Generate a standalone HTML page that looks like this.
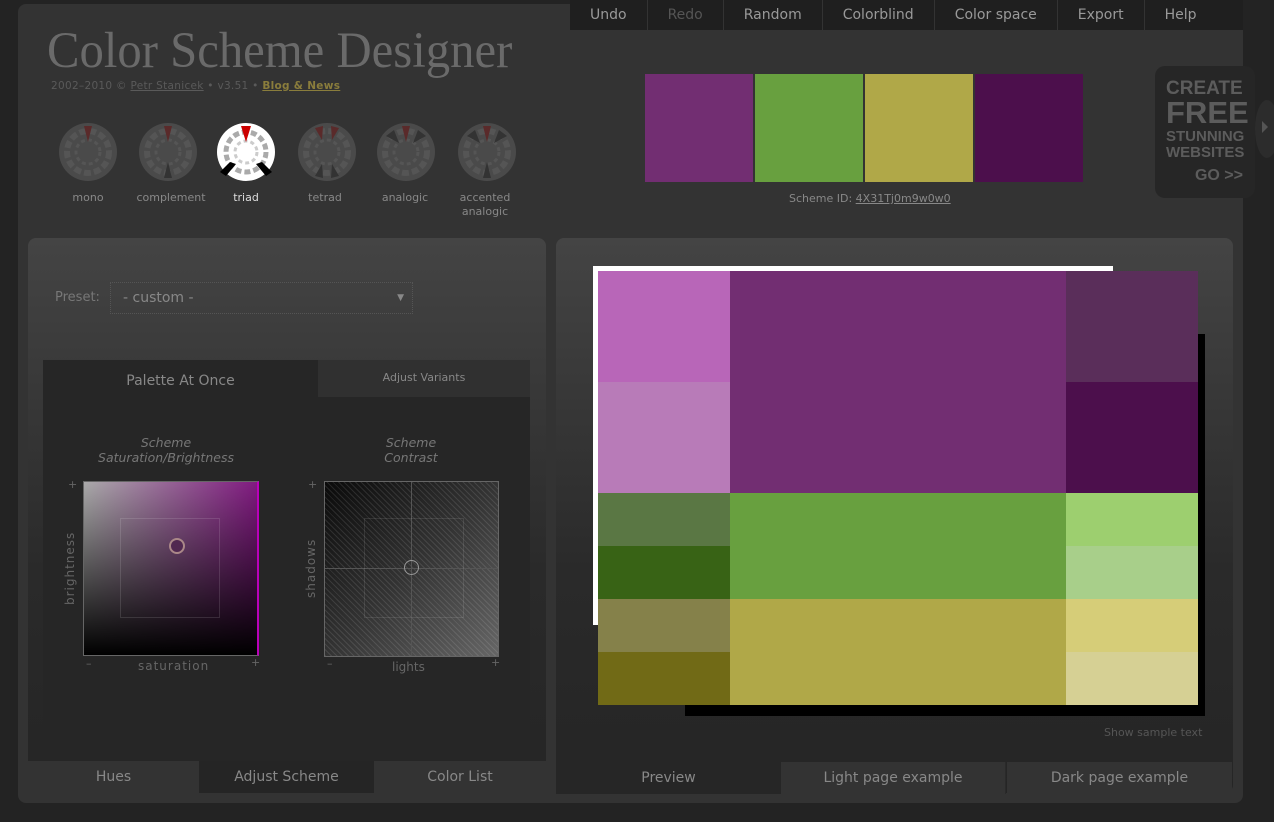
<!DOCTYPE html>
<html><head><meta charset="utf-8"><style>
*{margin:0;padding:0;box-sizing:border-box}
body{width:1274px;height:822px;background:#232323;font-family:"DejaVu Sans","Liberation Sans",sans-serif;position:relative;overflow:hidden;color:#888}
.a{position:absolute}
#main{left:18px;top:4px;width:1225px;height:799px;background:#333;border-radius:8px}
#nav{left:570px;top:0;width:673px;height:30px;background:#1f1f1f;display:flex;font-size:14px}
#nav div{height:30px;line-height:30px;padding:0 20px;border-right:1px solid #333;color:#999}
.sw{top:74px;width:108px;height:108px}
.w{width:60px;height:60px;border-radius:50%}
.lbl{font-size:11px;color:#888;text-align:center;width:100px}
.panel{border-radius:8px;background:linear-gradient(#444,#2a2a2a 60%,#252525)}
.c{position:absolute}
.tab{position:absolute;height:32px;line-height:32px;text-align:center;font-size:14px;color:#888}
</style></head><body>
<div class="a" id="main"></div>
<div class="a" id="nav"><div>Undo</div><div style="color:#555">Redo</div><div>Random</div><div>Colorblind</div><div>Color space</div><div>Export</div><div style="border:none">Help</div></div>
<div class="a" style="left:47px;top:22px;font-family:'Liberation Serif',serif;font-size:51px;color:#6a6a6a;transform:scaleX(0.955);transform-origin:left;white-space:nowrap">Color Scheme Designer</div>
<div class="a" style="left:51px;top:80px;font-size:10.5px;color:#5a5a5a;letter-spacing:.3px">2002–2010 © <u>Petr Stanicek</u> • v3.51 • <b style="color:#8a7d3c;text-decoration:underline">Blog &amp; News</b></div>

<svg class="a" style="left:0;top:0" width="560" height="200">
<defs><g id="wh"><circle r="29" fill="#4a4a4a"/><circle r="21" fill="none" stroke="#555" stroke-width="6" stroke-dasharray="7 3"/><circle r="12" fill="none" stroke="#555" stroke-width="3" stroke-dasharray="4 3"/></g></defs>
<g transform="translate(88,152)"><use href="#wh"/><polygon points="-4,-26 4,-26 0,-10" fill="#5a2a2a"/></g>
<g transform="translate(168,152)"><use href="#wh"/><polygon points="-4,-26 4,-26 0,-10" fill="#5a2a2a"/><polygon points="-4,26 4,26 0,10" fill="#333"/></g>
<g transform="translate(246,152)"><circle r="29" fill="#fff"/><circle r="20" fill="none" stroke="#aaa" stroke-width="5" stroke-dasharray="6 3"/><circle r="11" fill="none" stroke="#ccc" stroke-width="3" stroke-dasharray="4 3"/><polygon points="-5,-26 5,-26 0,-10" fill="#c00"/><polygon points="-16,10 -26,20 -20,24 -10,12" fill="#000"/><polygon points="16,10 26,20 20,24 10,12" fill="#000"/></g>
<g transform="translate(327,152)"><use href="#wh"/><polygon points="-12,-24 -4,-26 -5,-12" fill="#5a2a2a"/><polygon points="12,-24 4,-26 5,-12" fill="#5a2a2a"/><polygon points="-12,24 -4,26 -5,12" fill="#333"/><polygon points="12,24 4,26 5,12" fill="#333"/></g>
<g transform="translate(406,152)"><use href="#wh"/><polygon points="-4,-26 4,-26 0,-10" fill="#5a2a2a"/><polygon points="-20,-16 -12,-22 -7,-9" fill="#333"/><polygon points="20,-16 12,-22 7,-9" fill="#333"/></g>
<g transform="translate(487,152)"><use href="#wh"/><polygon points="-4,-26 4,-26 0,-10" fill="#5a2a2a"/><polygon points="-20,-16 -12,-22 -7,-9" fill="#333"/><polygon points="20,-16 12,-22 7,-9" fill="#333"/><polygon points="-4,26 4,26 0,10" fill="#333"/></g>
</svg>
<div class="a lbl" style="left:38px;top:191px">mono</div>
<div class="a lbl" style="left:121px;top:191px">complement</div>
<div class="a lbl" style="left:196px;top:191px;color:#ddd">triad</div>
<div class="a lbl" style="left:275px;top:191px">tetrad</div>
<div class="a lbl" style="left:355px;top:191px">analogic</div>
<div class="a lbl" style="left:435px;top:191px;line-height:14px">accented<br>analogic</div>

<div class="a sw" style="left:645px;background:#722e72"></div>
<div class="a sw" style="left:755px;background:#68a03f"></div>
<div class="a sw" style="left:865px;background:#b0a848"></div>
<div class="a sw" style="left:975px;background:#4c0f4c"></div>
<div class="a" style="left:789px;top:192px;font-size:11px;color:#888">Scheme ID: <u>4X31Tj0m9w0w0</u></div>

<div class="a" style="left:1255px;top:100px;width:24px;height:58px;background:#2c2c2c;border-radius:50%"></div>
<div class="a" style="left:1262px;top:121px;width:0;height:0;border-left:6px solid #555;border-top:6px solid transparent;border-bottom:6px solid transparent"></div>
<div class="a" style="left:1155px;top:66px;width:100px;height:132px;background:#262626;border-radius:10px;font-family:'Liberation Sans',sans-serif;font-weight:bold;color:#5c5c5c;text-align:left;padding:13px 0 0 11px;line-height:1">
<div style="font-size:19px">CREATE</div><div style="font-size:31px;margin-top:-1px">FREE</div><div style="font-size:15px;margin-top:1px">STUNNING</div><div style="font-size:15px;margin-top:1px">WEBSITES</div><div style="font-size:16px;text-align:right;padding-right:12px;margin-top:8px">GO &gt;&gt;</div></div>

<div class="a panel" style="left:28px;top:238px;width:518px;height:555px"></div>
<div class="a" style="left:55px;top:290px;font-size:13px;color:#777">Preset:</div>
<div class="a" style="left:110px;top:282px;width:303px;height:32px;border:1px dotted #555;font-size:14px;color:#888;padding:7px 12px">- custom -<span style="position:absolute;right:8px;top:10px;font-size:9px">▼</span></div>
<div class="a" style="left:43px;top:360px;width:487px;height:400px;background:#262626"></div>
<div class="a" style="left:318px;top:360px;width:212px;height:37px;background:#303030;text-align:center;line-height:36px;font-size:11px;color:#888">Adjust Variants</div>
<div class="a" style="left:43px;top:360px;width:275px;height:40px;text-align:center;line-height:42px;font-size:14px;color:#888">Palette At Once</div>
<div class="a" style="left:86px;top:435px;width:160px;text-align:center;font-style:italic;font-size:12.5px;line-height:15px;color:#777">Scheme<br>Saturation/Brightness</div>
<div class="a" style="left:331px;top:435px;width:160px;text-align:center;font-style:italic;font-size:12.5px;line-height:15px;color:#777">Scheme<br>Contrast</div>
<div class="a" style="left:83px;top:481px;width:176px;height:175px;border:1px solid #666;border-right:2px solid #b0b;background:linear-gradient(to bottom,transparent,#000),linear-gradient(to right,#aaa,#801a80)"></div>
<div class="a" style="left:120px;top:518px;width:100px;height:100px;border:1px solid rgba(255,255,255,.12)"></div>
<div class="a" style="left:169px;top:538px;width:16px;height:16px;border-radius:50%;border:2px solid #a88;background:#502850"></div>
<div class="a" style="left:324px;top:481px;width:175px;height:176px;border:1px solid #666;background:repeating-linear-gradient(45deg,rgba(255,255,255,.1) 0 1px,transparent 1px 4px),linear-gradient(135deg,#0a0a0a,#333 50%,#666)"></div>
<div class="a" style="left:411px;top:482px;width:1px;height:174px;background:#555"></div>
<div class="a" style="left:325px;top:568px;width:173px;height:1px;background:#555"></div>
<div class="a" style="left:404px;top:560px;width:15px;height:15px;border-radius:50%;border:1px solid #999"></div>
<div class="a" style="left:364px;top:518px;width:100px;height:100px;border:1px solid rgba(255,255,255,.1)"></div>
<div class="a" style="font-size:12px;color:#666;transform:rotate(-90deg);transform-origin:left top;left:63px;top:605px;letter-spacing:1px">brightness</div>
<div class="a" style="left:304px;top:598px;font-size:12px;color:#666;transform:rotate(-90deg);transform-origin:left top;letter-spacing:1px">shadows</div>
<div class="a" style="left:138px;top:659px;font-size:12px;color:#666;letter-spacing:1px">saturation</div>
<div class="a" style="left:392px;top:660px;font-size:12px;color:#666">lights</div>
<div class="a" style="left:68px;top:478px;font-size:11px;color:#666">+</div>
<div class="a" style="left:308px;top:478px;font-size:11px;color:#666">+</div>
<div class="a" style="left:86px;top:657px;font-size:11px;color:#666">–</div>
<div class="a" style="left:251px;top:656px;font-size:11px;color:#666">+</div>
<div class="a" style="left:327px;top:657px;font-size:11px;color:#666">–</div>
<div class="a" style="left:491px;top:656px;font-size:11px;color:#666">+</div>
<div class="tab" style="left:28px;top:761px;width:171px;background:#333">Hues</div>
<div class="tab" style="left:199px;top:761px;width:175px;background:#252525">Adjust Scheme</div>
<div class="tab" style="left:374px;top:761px;width:172px;background:#333">Color List</div>

<div class="a panel" style="left:556px;top:238px;width:677px;height:555px"></div>
<div class="a" style="left:685px;top:334px;width:520px;height:382px;background:#000"></div>
<div class="a" style="left:593px;top:266px;width:520px;height:359px;background:#fff"></div>
<div class="c" style="left:598px;top:271px;width:132px;height:111px;background:#b866b8"></div>
<div class="c" style="left:598px;top:382px;width:132px;height:111px;background:#b87bb8"></div>
<div class="c" style="left:598px;top:493px;width:132px;height:53px;background:#5a7744"></div>
<div class="c" style="left:598px;top:546px;width:132px;height:53px;background:#386315"></div>
<div class="c" style="left:598px;top:599px;width:132px;height:53px;background:#85814a"></div>
<div class="c" style="left:598px;top:652px;width:132px;height:53px;background:#716a16"></div>
<div class="c" style="left:730px;top:271px;width:336px;height:222px;background:#722e72"></div>
<div class="c" style="left:730px;top:493px;width:336px;height:106px;background:#68a03f"></div>
<div class="c" style="left:730px;top:599px;width:336px;height:106px;background:#b0a848"></div>
<div class="c" style="left:1066px;top:271px;width:132px;height:111px;background:#5a2e5a"></div>
<div class="c" style="left:1066px;top:382px;width:132px;height:111px;background:#4c0f4c"></div>
<div class="c" style="left:1066px;top:493px;width:132px;height:53px;background:#9dcf6f"></div>
<div class="c" style="left:1066px;top:546px;width:132px;height:53px;background:#a8cf8a"></div>
<div class="c" style="left:1066px;top:599px;width:132px;height:53px;background:#d6cd78"></div>
<div class="c" style="left:1066px;top:652px;width:132px;height:53px;background:#d6d094"></div>
<div class="a" style="left:1104px;top:726px;font-size:11px;color:#555">Show sample text</div>
<div class="tab" style="left:556px;top:762px;width:225px;background:#262626">Preview</div>
<div class="tab" style="left:781px;top:762px;width:225px;background:#333;border-right:1px solid #2a2a2a">Light page example</div>
<div class="tab" style="left:1007px;top:762px;width:225px;background:#333">Dark page example</div>
</body></html>
